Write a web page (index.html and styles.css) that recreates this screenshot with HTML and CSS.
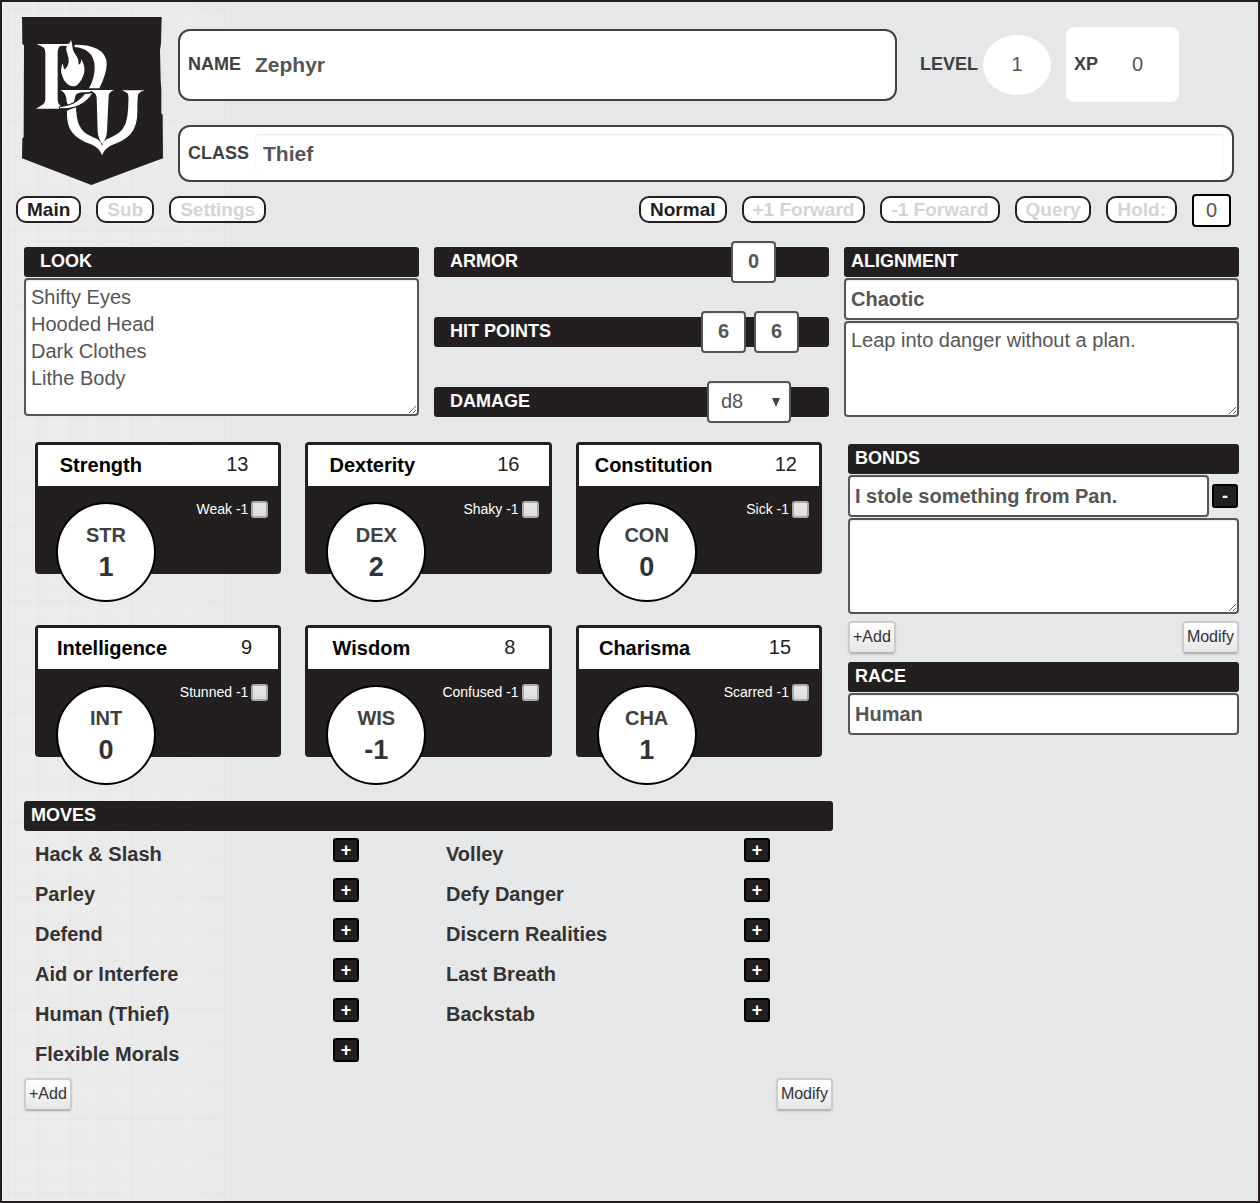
FILE: index.html
```html
<!DOCTYPE html>
<html lang="en">
<head>
<meta charset="utf-8">
<title>Zephyr - Character Sheet</title>
<link rel="stylesheet" href="styles.css">
</head>
<body>
<main class="sheet">
  <header class="header">
    <svg class="logo" viewBox="66 51 423 504" role="img" aria-label="Dungeon World">
      <path fill="#231f20" d="M66 51H485L483 130 480 150 482 240 484 270 484 340 488 344 489 475 440 493 274 555 66 475 67 415 71 412 72 136 67 132Z"/>
      <g fill="#fff">
        <path d="M110 132H189L181 138Q173 143 173 160V298Q174 317 185 319L180 326H108L120 319Q135 313 136 298V160Q136 144 127 140Z"/>
        <path d="M225 134Q268 134 292 147Q321 162 320 194Q319 222 298 265H267Q284 234 284 203Q284 170 264 155Q248 143 223 141Z"/>
        <path d="M176 132H206L203 138Q188 136 176 138Z"/>
        <path d="M213 120Q217 132 218 145Q219 154 230 169Q237 180 236 194Q244 191 244 177Q257 201 252 221Q246 241 233 254Q222 262 207 256Q192 246 187 228Q179 209 188 190Q190 202 194 209Q204 201 206 187Q207 174 202 161Q195 145 203 133Q211 129 213 120Z"/>
        <path d="M181 270H277L268 277H246Q229 279 226 288L222 306L205 314Q199 310 199 294Q196 278 181 270Z"/>
        <path d="M201 332L228 321Q229 351 235 369Q243 391 259 401Q277 411 293 418Q302 424 306 437Q310 424 320 418Q338 411 355 400Q369 390 377 370Q384 350 385 310Q387 283 382 279L366 271H434Q420 275 415 282Q412 288 412 335Q413 377 391 403Q372 423 342 433Q316 442 306 466Q298 443 273 433Q236 421 218 399Q199 376 201 332Z"/>
        <path d="M272 270H342Q328 275 326 287L321 394Q320 414 307 433Q294 415 293 394L290 294Q289 281 279 277Z"/>
      </g>
      <path fill="#fff" stroke="#231f20" stroke-width="3" d="M178 320Q213 317 234 301Q246 291 254 281L279 278Q263 304 238 316Q213 328 178 326Z"/>
    </svg>
    <div class="identity">
      <div class="identity-row">
        <div class="field-box name-box">
          <label for="name">NAME</label>
          <input id="name" class="plain-input" type="text" value="Zephyr">
        </div>
        <div class="level">
          <label for="level">LEVEL</label>
          <input id="level" class="level-input" type="text" value="1">
        </div>
        <div class="xp">
          <label for="xp">XP</label>
          <input id="xp" class="xp-input" type="text" value="0">
        </div>
      </div>
      <div class="field-box class-box">
        <label for="class">CLASS</label>
        <input id="class" class="plain-input inset-input" type="text" value="Thief">
      </div>
    </div>
  </header>

  <nav class="toolbar" aria-label="Sheet options">
    <div class="pill-group">
      <button class="pill active" type="button">Main</button>
      <button class="pill" type="button">Sub</button>
      <button class="pill" type="button">Settings</button>
    </div>
    <div class="pill-group">
      <button class="pill active" type="button">Normal</button>
      <button class="pill" type="button">+1 Forward</button>
      <button class="pill" type="button">-1 Forward</button>
      <button class="pill" type="button">Query</button>
      <button class="pill" type="button">Hold:</button>
      <input class="hold-input" type="text" value="0" aria-label="Hold">
    </div>
  </nav>

  <div class="overview">
    <section class="stack">
      <h2 class="bar bar-wide"><label for="look">LOOK</label></h2>
      <textarea id="look" class="box area look-area">Shifty Eyes
Hooded Head
Dark Clothes
Lithe Body</textarea>
    </section>
    <section class="vitals">
      <div class="bar bar-wide vital">
        <label for="armor">ARMOR</label>
        <div class="vital-values shift-armor"><input id="armor" class="box number" type="text" value="0"></div>
      </div>
      <div class="bar bar-wide vital">
        <label for="hp">HIT POINTS</label>
        <div class="vital-values"><input id="hp" class="box number" type="text" value="6"><input class="box number" type="text" value="6" aria-label="Maximum hit points"></div>
      </div>
      <div class="bar bar-wide vital">
        <label for="damage">DAMAGE</label>
        <div class="vital-values select-wrap">
          <select id="damage" class="box die"><option>d4</option><option>d6</option><option selected>d8</option><option>d10</option><option>d12</option></select>
        </div>
      </div>
    </section>
    <section class="stack">
      <h2 class="bar"><label for="alignment">ALIGNMENT</label></h2>
      <input id="alignment" class="box line" type="text" value="Chaotic">
      <textarea class="box area short-area" aria-label="Alignment description">Leap into danger without a plan.</textarea>
    </section>
  </div>

  <div class="details">
    <div class="left">
      <section class="stats" aria-label="Abilities">
        <article class="stat">
          <div class="stat-head"><label for="str">Strength</label><input id="str" type="text" value="13"></div>
          <div class="stat-body"><div class="circle"><button type="button">STR</button><output>1</output></div><label class="debility">Weak -1 <input type="checkbox"></label></div>
        </article>
        <article class="stat">
          <div class="stat-head"><label for="dex">Dexterity</label><input id="dex" type="text" value="16"></div>
          <div class="stat-body"><div class="circle"><button type="button">DEX</button><output>2</output></div><label class="debility">Shaky -1 <input type="checkbox"></label></div>
        </article>
        <article class="stat">
          <div class="stat-head"><label for="con">Constitution</label><input id="con" type="text" value="12"></div>
          <div class="stat-body"><div class="circle"><button type="button">CON</button><output>0</output></div><label class="debility">Sick -1 <input type="checkbox"></label></div>
        </article>
        <article class="stat">
          <div class="stat-head"><label for="int">Intelligence</label><input id="int" type="text" value="9"></div>
          <div class="stat-body"><div class="circle"><button type="button">INT</button><output>0</output></div><label class="debility">Stunned -1 <input type="checkbox"></label></div>
        </article>
        <article class="stat">
          <div class="stat-head"><label for="wis">Wisdom</label><input id="wis" type="text" value="8"></div>
          <div class="stat-body"><div class="circle"><button type="button">WIS</button><output>-1</output></div><label class="debility">Confused -1 <input type="checkbox"></label></div>
        </article>
        <article class="stat">
          <div class="stat-head"><label for="cha">Charisma</label><input id="cha" type="text" value="15"></div>
          <div class="stat-body"><div class="circle"><button type="button">CHA</button><output>1</output></div><label class="debility">Scarred -1 <input type="checkbox"></label></div>
        </article>
      </section>

      <section>
        <h2 class="bar">MOVES</h2>
        <ul class="moves">
          <li><span>Hack &amp; Slash</span><button class="mini" type="button">+</button></li>
          <li><span>Volley</span><button class="mini" type="button">+</button></li>
          <li><span>Parley</span><button class="mini" type="button">+</button></li>
          <li><span>Defy Danger</span><button class="mini" type="button">+</button></li>
          <li><span>Defend</span><button class="mini" type="button">+</button></li>
          <li><span>Discern Realities</span><button class="mini" type="button">+</button></li>
          <li><span>Aid or Interfere</span><button class="mini" type="button">+</button></li>
          <li><span>Last Breath</span><button class="mini" type="button">+</button></li>
          <li><span>Human (Thief)</span><button class="mini" type="button">+</button></li>
          <li><span>Backstab</span><button class="mini" type="button">+</button></li>
          <li><span>Flexible Morals</span><button class="mini" type="button">+</button></li>
        </ul>
        <div class="actions">
          <button class="action" type="button">+Add</button>
          <button class="action" type="button">Modify</button>
        </div>
      </section>
    </div>

    <aside class="right">
      <section class="stack">
        <h2 class="bar">BONDS</h2>
        <div class="bond-row">
          <input class="box line" type="text" value="I stole something from Pan." aria-label="Bond">
          <button class="mini" type="button" aria-label="Hide bond description">-</button>
        </div>
        <textarea class="box area short-area" aria-label="Bond description"></textarea>
        <div class="actions">
          <button class="action" type="button">+Add</button>
          <button class="action" type="button">Modify</button>
        </div>
      </section>
      <section class="stack">
        <h2 class="bar"><label for="race">RACE</label></h2>
        <input id="race" class="box line" type="text" value="Human">
      </section>
    </aside>
  </div>
</main>
</body>
</html>
```
FILE: styles.css
```css
* {
  box-sizing: border-box;
}

body {
  margin: 0;
  font: 20px/27px "Liberation Sans", Arial, sans-serif;
  color: #333;
}

input,
textarea,
select,
button {
  margin: 0;
  padding: 0;
  font: inherit;
  color: #555;
}

h2,
ul {
  margin: 0;
  padding: 0;
}

.sheet {
  min-height: 100vh;
  padding: 15px 19px 15px 22px;
  border: 2px solid #231f20;
  background:
    repeating-linear-gradient(90deg, rgba(255, 255, 255, .16) 0 1px, transparent 1px 5px, rgba(0, 0, 0, .012) 5px 7px, transparent 7px 13px, rgba(0, 0, 0, .01) 13px 14px, transparent 14px 31px) 0 0 / 228px 100% no-repeat,
    repeating-linear-gradient(0deg, rgba(255, 255, 255, .16) 0 1px, transparent 1px 7px, rgba(0, 0, 0, .012) 7px 9px, transparent 9px 17px, rgba(0, 0, 0, .01) 17px 18px, transparent 18px 37px) 0 0 / 228px 100% no-repeat,
    linear-gradient(90deg, #ebebeb, #eaeaea 85%, #e8e8e9) 0 0 / 228px 100% no-repeat,
    #e6e7e9;
}

/* Header */
.header {
  display: flex;
  gap: 15px;
  margin: 0 5px 0 -2px;
}

.logo {
  flex: none;
  width: 141px;
  height: 168px;
}

.identity {
  flex: 1;
  padding-top: 10px;
}

.identity label {
  font-size: 18px;
  font-weight: bold;
  color: #404040;
}

.identity-row {
  display: flex;
  align-items: center;
  margin: 0 55px 23px 0;
}

.field-box {
  display: flex;
  align-items: center;
  padding: 0 8px;
  border: 2px solid #404042;
  border-radius: 12px;
  background: #fff;
}

.name-box {
  flex: 1;
  height: 72px;
  margin-right: 23px;
}

.class-box {
  height: 57px;
}

.plain-input {
  flex: 1;
  min-width: 0;
  height: 40px;
  margin-left: 6px;
  padding: 0 8px;
  border: 0;
  border-radius: 4px;
  font-size: 21px;
  font-weight: bold;
  background: none;
}

.inset-input {
  box-shadow: inset 0 1px 2px rgba(0, 0, 0, .1);
}

.level {
  display: flex;
  align-items: center;
  gap: 5px;
  margin-right: 15px;
}

.level-input {
  width: 68px;
  height: 60px;
  border: 0;
  border-radius: 50%;
  text-align: center;
  background: #fff;
}

.xp {
  display: flex;
  align-items: center;
  width: 113px;
  height: 75px;
  padding: 0 2px 0 8px;
  border-radius: 8px;
  background: #fff;
}

.xp-input {
  flex: 1;
  min-width: 0;
  border: 0;
  text-align: center;
  background: none;
}

/* Toolbar */
.toolbar {
  display: flex;
  justify-content: space-between;
  margin: 9px 8px 20px -8px;
}

.pill-group {
  display: flex;
  align-items: flex-start;
  gap: 15px;
}

.pill {
  height: 27px;
  margin-top: 2px;
  padding: 0 9px;
  border: 2px solid #231f20;
  border-radius: 10px;
  font-size: 19px;
  line-height: 23px;
  font-weight: bold;
  color: #d4d4d4;
  background: #fff;
}

.pill.active {
  color: #231f20;
}

.hold-input {
  width: 39px;
  height: 33px;
  border: 2px solid #000;
  border-radius: 4px;
  text-align: center;
  background: #fff;
}

/* Shared bars and boxes */
.bar {
  height: 30px;
  padding-left: 7px;
  border-radius: 3px;
  font-size: 18px;
  line-height: 28px;
  font-weight: bold;
  color: #fff;
  background: #231f20;
}

.bar-wide {
  padding-left: 16px;
}

.box {
  border: 2px solid #555;
  border-radius: 4px;
  background: #fff;
  box-shadow: inset 0 1px 1px rgba(0, 0, 0, .08);
}

.stack {
  display: flex;
  flex-direction: column;
  gap: 1px;
}

.line {
  width: 100%;
  height: 42px;
  padding: 0 5px;
  font-weight: bold;
}

.area {
  display: block;
  width: 100%;
  padding: 4px 5px;
  resize: vertical;
}

.short-area {
  height: 96px;
}

.look-area {
  height: 138px;
}

.overview {
  display: grid;
  grid-template-columns: repeat(3, 1fr);
  gap: 15px;
  margin-bottom: 25px;
}

.vitals {
  display: flex;
  flex-direction: column;
  gap: 40px;
}

.vital {
  display: flex;
  align-items: center;
  justify-content: space-between;
}

.vital label {
  padding-bottom: 2px;
}

.vital-values {
  display: flex;
  gap: 8px;
  margin-right: 30px;
}

.shift-armor {
  margin-right: 53px;
}

.number {
  width: 45px;
  height: 42px;
  padding-bottom: 2px;
  text-align: center;
  font-size: 20px;
  font-weight: bold;
}

.select-wrap {
  position: relative;
  margin-right: 38px;
}

.select-wrap::after {
  content: "";
  position: absolute;
  top: 17px;
  right: 11px;
  width: 8px;
  height: 9px;
  background: #444;
  clip-path: polygon(0 0, 100% 0, 50% 100%);
  pointer-events: none;
}

.die {
  width: 84px;
  height: 42px;
  padding: 0 0 2px 12px;
  appearance: none;
  font-size: 20px;
  font-weight: normal;
}

.details {
  display: grid;
  grid-template-columns: 809fr 391fr;
  gap: 15px;
}

/* Ability cards */
.stats {
  display: grid;
  grid-template-columns: repeat(3, 1fr);
  gap: 51px 24px;
  margin-bottom: 44px;
  padding: 0 11px;
}

.stat {
  height: 132px;
  border: 3px solid #231f20;
  border-radius: 4px;
  background: #231f20;
}

.stat-head {
  display: grid;
  grid-template-columns: 16fr auto 62fr auto 22fr;
  align-items: center;
  height: 41px;
  color: #000;
  background: #fff;
}

.stat-head label {
  grid-column: 2;
  font-weight: bold;
}

.stat-head input {
  grid-column: 4;
  field-sizing: content;
  padding-bottom: 2px;
  border: 0;
  color: #222;
  background: none;
}

.stat-body {
  display: flex;
  align-items: flex-start;
  justify-content: space-between;
  padding: 16px 10px 0 18px;
}

.circle {
  display: flex;
  flex-direction: column;
  align-items: center;
  width: 100px;
  height: 100px;
  padding-top: 18px;
  border: 2px solid #000;
  border-radius: 50%;
  background: #fff;
}

.circle button {
  border: 0;
  font-weight: bold;
  color: #404040;
  background: none;
}

.circle output {
  font-size: 27px;
  line-height: 36px;
  font-weight: bold;
  color: #333;
}

.debility {
  display: flex;
  align-items: center;
  gap: 3px;
  margin-top: -1px;
  font-size: 14px;
  line-height: 17px;
  color: #fff;
}

.debility input {
  width: 17px;
  height: 17px;
  appearance: none;
  border: 2px solid #aaa;
  border-radius: 3px;
  background: linear-gradient(#e8e8e8, #dcdcdc);
}

/* Moves */
.moves {
  display: grid;
  grid-template-columns: 1fr 1fr;
  column-gap: 13px;
  list-style: none;
}

.moves li {
  display: flex;
  align-items: flex-start;
  justify-content: space-between;
  height: 40px;
  padding: 7px 63px 0 11px;
}

.moves span {
  padding-top: 3px;
  font-weight: bold;
}

.mini {
  flex: none;
  width: 26px;
  height: 24px;
  border: 2px solid #000;
  border-radius: 3px;
  font-size: 18px;
  line-height: 20px;
  font-weight: bold;
  color: #fff;
  background: #231f20;
}

.actions {
  display: flex;
  justify-content: space-between;
  margin: 6px 0 8px;
}

.moves + .actions {
  margin-top: 7px;
}

.action {
  height: 33px;
  padding: 0 3px 1px;
  border: 2px solid #ccc;
  border-bottom-color: #b8b8b8;
  border-radius: 4px;
  font-size: 16px;
  line-height: 20px;
  color: #333;
  background: linear-gradient(#fff, #e6e6e6);
  box-shadow: 0 1px 2px rgba(0, 0, 0, .1);
}

.right {
  padding-top: 2px;
}

.bond-row {
  display: flex;
  align-items: center;
  gap: 3px;
  padding-right: 1px;
}
```
